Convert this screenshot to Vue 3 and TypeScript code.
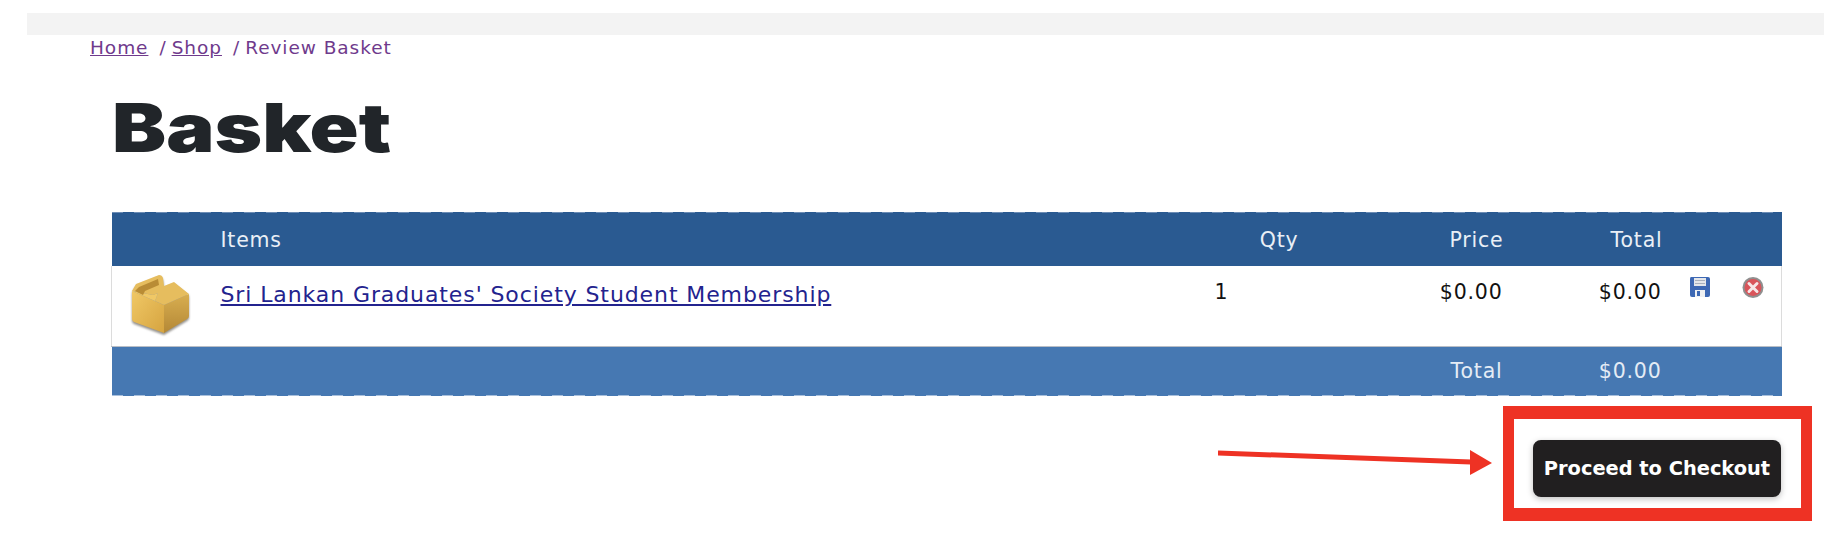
<script setup lang="ts">
interface BasketRow {
  name: string;
  qty: number;
  price: string;
  total: string;
}

const row: BasketRow = {
  name: "Sri Lankan Graduates' Society Student Membership",
  qty: 1,
  price: "$0.00",
  total: "$0.00",
};
</script>

<template>
  <div class="page">
    <div class="topbar"></div>
    <nav class="crumbs">
      <a href="#">Home</a><span class="sep">/</span><a href="#">Shop</a><span class="sep">/</span><span>Review Basket</span>
    </nav>
    <h1>Basket</h1>

    <table class="basket">
      <colgroup>
        <col class="c-icon" />
        <col class="c-name" />
        <col class="c-qty" />
        <col class="c-price" />
        <col class="c-total" />
        <col class="c-save" />
        <col class="c-del" />
      </colgroup>
      <thead>
        <tr>
          <th></th>
          <th class="left">Items</th>
          <th class="qty-head">Qty</th>
          <th class="right">Price</th>
          <th class="right">Total</th>
          <th></th>
          <th></th>
        </tr>
      </thead>
      <tbody>
        <tr>
          <td class="icon-cell">
            <svg class="box" width="62" height="60" viewBox="0 0 62 60">
              <defs>
                <linearGradient id="boxLeft" x1="0" y1="0" x2="1" y2="1">
                  <stop offset="0" stop-color="#f0c866" />
                  <stop offset="1" stop-color="#d6a440" />
                </linearGradient>
                <linearGradient id="boxRight" x1="0" y1="0" x2="0" y2="1">
                  <stop offset="0" stop-color="#d8ae50" />
                  <stop offset="1" stop-color="#b48836" />
                </linearGradient>
              </defs>
              <path d="M1 16 L33 30 L33 58 L3 47 Q1 46 1 44 Z" fill="url(#boxLeft)" />
              <path d="M33 30 L58 19 L58 41 Q58 43 56 44 L33 58 Z" fill="url(#boxRight)" />
              <path d="M1 16 L5 9 L28 0 Q31 0 32 3 L33 11 L43 7 L58 19 L33 30 L24 26 L27 18 L22 20 Z" fill="#e6bd5e" />
              <path d="M1 16 L22 20 L27 18 L24 26 Z" fill="#f0c866" />
              <path d="M8 12 L27 4 L28 10 L14 16 L12 20 L4 16 Z" fill="#b98c35" />
            </svg>
          </td>
          <td class="name-cell"><a href="#">{{ row.name }}</a></td>
          <td class="qty-cell">{{ row.qty }}</td>
          <td class="right">{{ row.price }}</td>
          <td class="right">{{ row.total }}</td>
          <td class="action save-cell">
            <svg width="22" height="20" viewBox="0 0 22 20">
              <path d="M2 0 H19 Q21 0 21 2 V18 Q21 20 19 20 H3 Q1 20 1 18 V2 Q1 0 2 0 Z" fill="#3d68b4" />
              <rect x="5" y="1" width="12" height="8" fill="#e4e6ea" />
              <rect x="6" y="3" width="10" height="1" fill="#a9b0bd" />
              <rect x="6" y="6" width="10" height="1" fill="#a9b0bd" />
              <rect x="6" y="13" width="10" height="7" fill="#eef0f3" />
              <rect x="8" y="14" width="3" height="5" fill="#3d68b4" />
            </svg>
          </td>
          <td class="action del-cell">
            <svg width="22" height="21" viewBox="0 0 22 21">
              <circle cx="11" cy="10.5" r="10.5" fill="#8f8f8f" />
              <circle cx="11" cy="10.5" r="8.5" fill="#d9545a" />
              <path d="M7 6.5 L15 14.5 M15 6.5 L7 14.5" stroke="#f6e6e6" stroke-width="3" stroke-linecap="round" />
            </svg>
          </td>
        </tr>
      </tbody>
      <tfoot>
        <tr>
          <td></td>
          <td></td>
          <td></td>
          <td class="right">Total</td>
          <td class="right">{{ row.total }}</td>
          <td></td>
          <td></td>
        </tr>
      </tfoot>
    </table>

    <div class="actions">
      <button type="button" class="checkout">Proceed to Checkout</button>
    </div>

    <!-- annotation drawn over the screenshot -->
    <div class="callout"></div>
    <svg class="arrow" width="280" height="30" viewBox="0 0 280 30">
      <path d="M0 6 L253 15" stroke="#ee3224" stroke-width="5" />
      <path d="M252 3 L274 16 L252 28 Z" fill="#ee3224" />
    </svg>
  </div>
</template>

<style>
html,
body {
  background: #fff;
}
</style>

<style scoped>
.page {
  position: relative;
  width: 1824px;
  height: 542px;
  overflow: hidden;
  padding-top: 13px;
  box-sizing: border-box;
  background: #fff;
  font-family: "DejaVu Sans", Inter, sans-serif;
}
.topbar {
  height: 22px;
  margin-left: 27px;
  background: #f3f3f3;
}
.crumbs {
  margin-left: 90px;
  font-size: 18.5px;
  letter-spacing: 0.95px;
  line-height: 26px;
  color: #6f3a8c;
}
.crumbs a {
  color: #6f3a8c;
}
.sep {
  margin: 0 5px 0 11px;
}
h1 {
  width: max-content;
  margin: 26px 0 0 112px;
  font-family: Inter, sans-serif;
  font-size: 67px;
  line-height: 82px;
  font-weight: 900;
  color: #212529;
  transform: scaleX(1.21);
  transform-origin: left center;
}
.basket {
  margin: 43px 0 0 111px;
  width: 1670px;
  table-layout: fixed;
  border-collapse: collapse;
  font-size: 20.5px;
  letter-spacing: 0.8px;
}
.c-icon { width: 109px; }
.c-name { width: 993px; }
.c-qty { width: 118px; }
.c-price { width: 172px; }
.c-total { width: 159px; }
.c-save { width: 53px; }
.c-del { width: 66px; }
.basket thead tr {
  height: 54px;
  color: #e9eff6;
  background: repeating-linear-gradient(90deg, #6d8db5 0 11px, transparent 11px 22px) top / 100% 1px no-repeat, #2a5a91;
}
.basket th {
  font-weight: 400;
  padding: 1px 0 0;
}
.left {
  text-align: left;
}
.right {
  text-align: right;
  padding: 0 1px 0 0;
}
.basket .qty-head {
  text-align: right;
  padding-right: 33px;
}
.basket tbody tr {
  height: 80px;
  border-left: 1px solid #dcdcdc;
  border-right: 1px solid #dcdcdc;
  border-bottom: 1px solid #b9bec6;
}
.basket tbody td {
  vertical-align: top;
  padding-top: 14px;
  color: #111;
}
.basket tbody .icon-cell {
  padding: 9px 0 0 19px;
}
.basket tbody .name-cell {
  font-size: 22px;
  letter-spacing: 0.9px;
  padding-top: 16px;
}
.name-cell a {
  margin-left: -1px;
  color: #23238e;
}
.basket tbody .qty-cell {
  text-align: left;
  padding-left: -1px;
}
.basket tbody .action {
  padding: 11px 0 0 26px;
}
.basket svg {
  display: block;
  filter: blur(0.4px);
}
.basket svg.box {
  filter: drop-shadow(0 2px 1px rgba(60, 55, 45, 0.55)) blur(0.4px);
}
.basket tfoot tr {
  height: 50px;
  color: #e4ecf5;
  background: repeating-linear-gradient(90deg, #a9c0dc 0 11px, transparent 11px 22px) bottom / 100% 1px no-repeat, #4678b2;
}
.actions {
  display: flex;
  justify-content: flex-end;
  width: 1781px;
  margin-top: 44px;
}
.checkout {
  width: 248px;
  height: 57px;
  border: 0;
  border-radius: 8px;
  background: #211f20;
  color: #fff;
  font-family: inherit;
  font-size: 19.4px;
  font-weight: 700;
  padding: 0;
  box-shadow: 0 2px 6px rgba(0, 0, 0, 0.25);
}
.callout {
  position: absolute;
  left: 1503px;
  top: 406px;
  width: 309px;
  height: 115px;
  box-sizing: border-box;
  border: solid #ee3224;
  border-width: 13px 11px;
}
.arrow {
  position: absolute;
  left: 1218px;
  top: 447px;
}
</style>
